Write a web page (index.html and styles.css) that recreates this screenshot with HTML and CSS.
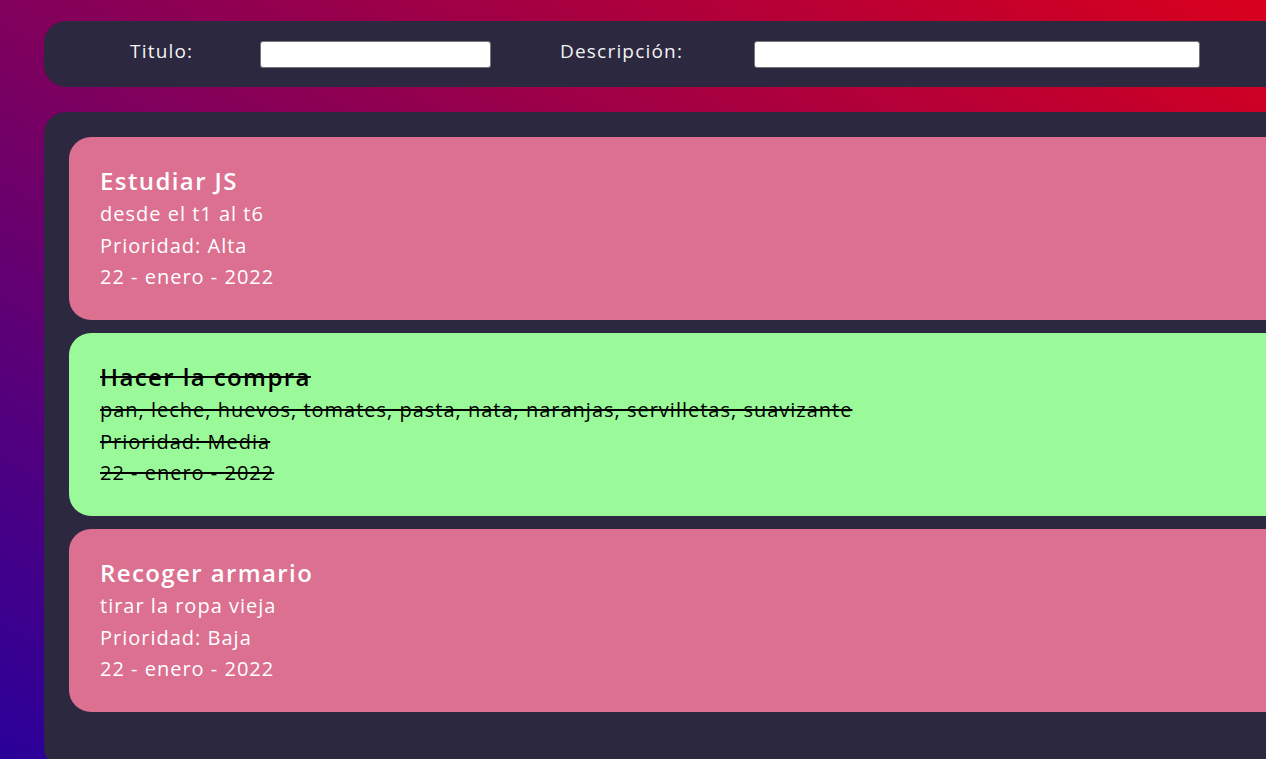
FILE: index.html
```html
<!DOCTYPE html>
<html lang="es">
<head>
<meta charset="utf-8">
<title>Tareas</title>
<link rel="stylesheet" href="styles.css">
</head>
<body>
<div class="page">
  <header class="form-bar">
    <label class="label label-title" for="titulo">Titulo:</label>
    <input class="field field-title" id="titulo" type="text">
    <label class="label label-desc" for="desc">Descripción:</label>
    <input class="field field-desc" id="desc" type="text">
  </header>
  <main class="board">
    <article class="task pending">
      <h2 class="task-title">Estudiar JS</h2>
      <p class="task-line">desde el t1 al t6</p>
      <p class="task-line">Prioridad: Alta</p>
      <p class="task-line">22 - enero - 2022</p>
    </article>
    <article class="task done">
      <h2 class="task-title">Hacer la compra</h2>
      <p class="task-line">pan, leche, huevos, tomates, pasta, nata, naranjas, servilletas, suavizante</p>
      <p class="task-line">Prioridad: Media</p>
      <p class="task-line">22 - enero - 2022</p>
    </article>
    <article class="task pending">
      <h2 class="task-title">Recoger armario</h2>
      <p class="task-line">tirar la ropa vieja</p>
      <p class="task-line">Prioridad: Baja</p>
      <p class="task-line">22 - enero - 2022</p>
    </article>
  </main>
</div>
</body>
</html>
```
FILE: styles.css
```css
html, body {
  margin: 0;
  height: 100%;
  overflow: hidden;
}
body {
  background: linear-gradient(to top right, #2a009a, #d9001d);
  font-family: "Open Sans", "DejaVu Sans", sans-serif;
  color: #fff;
}
.page {
  padding: 21px 0 0 44px;
}
.form-bar {
  width: 1300px;
  height: 66px;
  box-sizing: border-box;
  background: #2b2840;
  border-radius: 22px;
  display: flex;
  align-items: center;
}
.label {
  font-size: 19px;
  font-weight: 400;
  letter-spacing: 1.2px;
  color: #f4f4f4;
  box-sizing: border-box;
  margin-top: -6px;
}
.label-title {
  width: 216px;
  padding-left: 86px;
}
.label-desc {
  width: 263px;
  padding-left: 69px;
}
.field {
  height: 27px;
  box-sizing: border-box;
  border: 1px solid #767676;
  border-radius: 3px;
  background: #fff;
  margin: 0;
}
.field-title { width: 231px; }
.field-desc { width: 446px; }

.board {
  width: 1300px;
  margin-top: 25px;
  background: #2b2840;
  border-radius: 22px;
  padding: 25px 0 57px 25px;
  box-sizing: border-box;
  display: flex;
  flex-direction: column;
  gap: 13px;
}
.task {
  border-radius: 22px;
  padding: 27px 31px 27px;
  height: 183px;
  box-sizing: border-box;
}
.task.pending {
  background: #db7090;
  color: #fff;
}
.task.done {
  background: #9afa9a;
  color: #000;
  text-decoration: line-through;
}
.task-title {
  margin: 0;
  font-size: 24px;
  font-weight: 600;
  letter-spacing: 1.4px;
  line-height: 34px;
}
.task-line {
  margin: 0;
  font-size: 20px;
  font-weight: 400;
  letter-spacing: 1px;
  line-height: 31.5px;
}
```
